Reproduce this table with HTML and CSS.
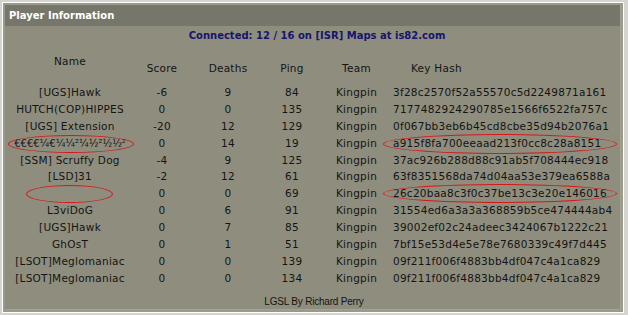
FILE: index.html
```html
<!DOCTYPE html>
<html>
<head>
<meta charset="utf-8">
<link rel="stylesheet" href="styles.css">
</head>
<body>
<div class="frame">
  <div class="panel">
    <div class="title">Player Information</div>
    <div class="content">
      <div class="connected">Connected: 12 / 16 on [ISR] Maps at is82.com</div>
      <table class="players">
        <colgroup>
          <col class="c-name"><col class="c-score"><col class="c-deaths"><col class="c-ping"><col class="c-team"><col class="c-hash">
        </colgroup>
        <thead>
          <tr>
            <th class="th-name">Name</th><th>Score</th><th>Deaths</th><th>Ping</th><th>Team</th><th class="th-hash">Key Hash</th>
          </tr>
        </thead>
        <tbody>
          <tr><td>[UGS]Hawk</td><td>-6</td><td>9</td><td>84</td><td>Kingpin</td><td class="hash">3f28c2570f52a55570c5d2249871a161</td></tr>
          <tr><td>HUTCH(COP)HIPPES</td><td>0</td><td>0</td><td>135</td><td>Kingpin</td><td class="hash">7177482924290785e1566f6522fa757c</td></tr>
          <tr><td>[UGS] Extension</td><td>-20</td><td>12</td><td>129</td><td>Kingpin</td><td class="hash">0f067bb3eb6b45cd8cbe35d94b2076a1</td></tr>
          <tr><td class="mark"><span class="odd">€€€€¼€¼¼²¼½²½½²</span><span class="ring ring-n1"></span></td><td>0</td><td>14</td><td>19</td><td>Kingpin</td><td class="hash mark">a915f8fa700eeaad213f0cc8c28a8151<span class="ring ring-h1"></span></td></tr>
          <tr><td>[SSM] Scruffy Dog</td><td>-4</td><td>9</td><td>125</td><td>Kingpin</td><td class="hash">37ac926b288d88c91ab5f708444ec918</td></tr>
          <tr><td>[LSD]31</td><td>-2</td><td>12</td><td>61</td><td>Kingpin</td><td class="hash">63f8351568da74d04aa53e379ea6588a</td></tr>
          <tr><td class="mark"><span class="ring ring-n2"></span></td><td>0</td><td>0</td><td>69</td><td>Kingpin</td><td class="hash mark">26c20baa8c3f0c37be13c3e20e146016<span class="ring ring-h2"></span></td></tr>
          <tr><td>L3viDoG</td><td>0</td><td>6</td><td>91</td><td>Kingpin</td><td class="hash">31554ed6a3a3a368859b5ce474444ab4</td></tr>
          <tr><td>[UGS]Hawk</td><td>0</td><td>7</td><td>85</td><td>Kingpin</td><td class="hash">39002ef02c24adeec3424067b1222c21</td></tr>
          <tr><td>GhOsT</td><td>0</td><td>1</td><td>51</td><td>Kingpin</td><td class="hash">7bf15e53d4e5e78e7680339c49f7d445</td></tr>
          <tr><td>[LSOT]Meglomaniac</td><td>0</td><td>0</td><td>139</td><td>Kingpin</td><td class="hash">09f211f006f4883bb4df047c4a1ca829</td></tr>
          <tr><td>[LSOT]Meglomaniac</td><td>0</td><td>0</td><td>134</td><td>Kingpin</td><td class="hash">09f211f006f4883bb4df047c4a1ca829</td></tr>
        </tbody>
      </table>
      <div class="footer">LGSL By Richard Perry</div>
    </div>
  </div>
</div>
</body>
</html>
```
FILE: styles.css
```css
html, body {
  margin: 0;
  padding: 0;
}
body {
  width: 628px;
  height: 315px;
  overflow: hidden;
  background: #d6d4ce;
  font-family: "DejaVu Sans", Verdana, sans-serif;
}
.frame {
  box-sizing: border-box;
  margin: 2px 0 0 2px;
  width: 622px;
  height: 311px;
  border: 1px solid #ffffff;
  padding: 2px;
  background: #9a9a8a;
}
.panel {
  height: 100%;
  display: flex;
  flex-direction: column;
  background: #8f8e7e;
  border-right: 1px solid #a3a393;
  border-bottom: 1px solid #a3a393;
  box-sizing: border-box;
}
.title {
  height: 21px;
  line-height: 21px;
  background: #76776a;
  color: #ffffff;
  font-weight: bold;
  font-size: 10px;
  padding-left: 4px;
}
.content {
  flex: 1;
  display: flex;
  flex-direction: column;
  padding: 3px 0 0 3px;
}
.connected {
  text-align: center;
  color: #15156e;
  font-weight: bold;
  font-size: 10px;
  line-height: 14px;
  height: 14px;
  padding-left: 6px;
}
.players {
  margin-top: 9px;
  width: 610px;
  table-layout: fixed;
  border-collapse: collapse;
  font-size: 10.5px;
  letter-spacing: 0.25px;
  color: #141414;
}
.c-name { width: 124px; }
.c-score { width: 60px; }
.c-deaths { width: 72px; }
.c-ping { width: 56px; }
.c-team { width: 73px; }
.c-hash { width: 225px; }
.players th {
  font-weight: normal;
  height: 29px;
  padding: 0;
  text-align: center;
  vertical-align: middle;
  white-space: nowrap;
}
.players th.th-name {
  vertical-align: top;
  padding-top: 3px;
}
.players th.th-hash {
  text-align: left;
  padding-left: 18px;
}
.players td {
  height: 16.9px;
  padding: 0;
  text-align: center;
  vertical-align: middle;
  white-space: nowrap;
  line-height: 13px;
}
.players td.hash {
  text-align: left;
  overflow: visible;
}
.odd {
  font-size: 10px;
  letter-spacing: 0;
}
.mark {
  position: relative;
}
.ring {
  position: absolute;
  border: 1px solid #d41818;
  border-radius: 50%;
  pointer-events: none;
}
.ring-n1 { left: 0; top: 0; width: 124px; height: 16px; }
.ring-h1 { left: -10px; top: -1px; width: 232px; height: 18px; }
.ring-n2 { left: 18px; top: 0; width: 85px; height: 16px; }
.ring-h2 { left: -10px; top: -1px; width: 232px; height: 17px; }
.footer {
  margin-top: auto;
  text-align: center;
  font-family: "Liberation Sans", Arial, sans-serif;
  font-size: 10px;
  letter-spacing: -0.2px;
  color: #141414;
  line-height: 14px;
  padding: 0;
}
```
